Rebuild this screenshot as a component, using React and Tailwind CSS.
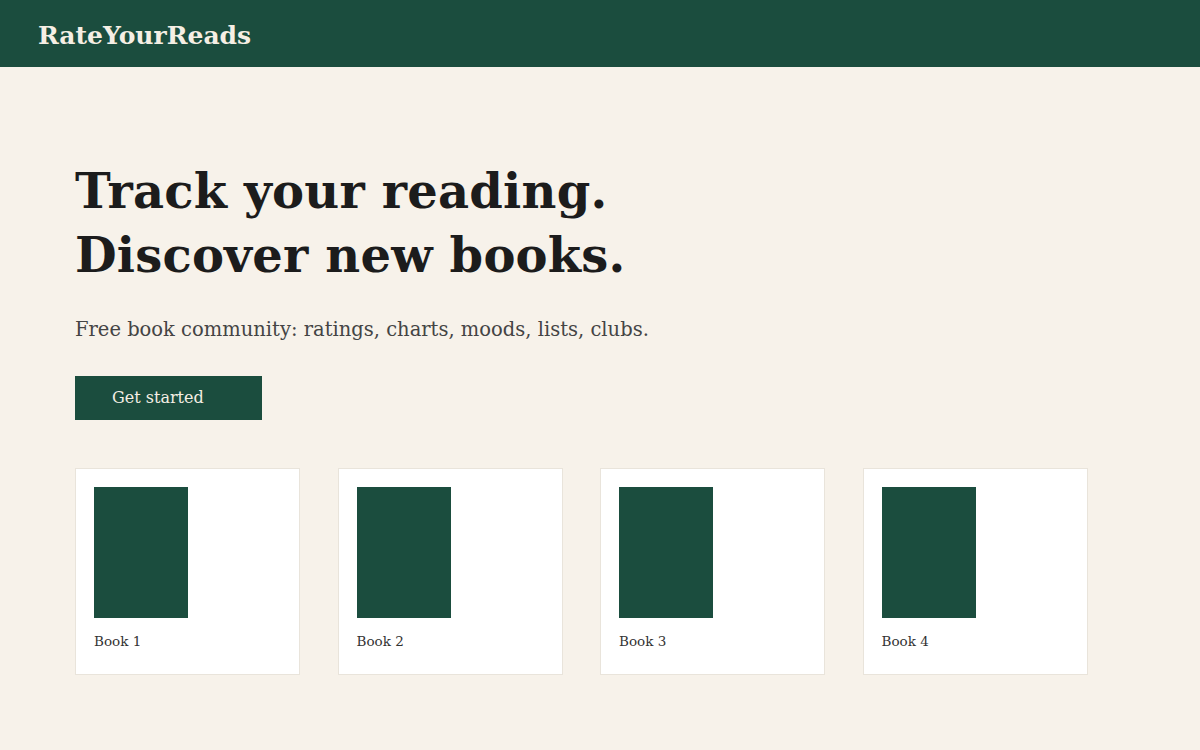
import React from 'react';

const books = ['Book 1', 'Book 2', 'Book 3', 'Book 4'];

const serif = "font-['DejaVu_Serif',Georgia,serif]";

const App = () => {
  return (
    <div className={`min-h-screen bg-[#f7f2ea] text-[#1c1c1c] ${serif}`}>
      <header className="h-[67px] bg-[#1b4d3e] flex items-center px-[38px] pt-[4px]">
        <h1 className="text-[25px] font-bold text-[#f5efe4]">RateYourReads</h1>
      </header>

      <main className="px-[75px] pt-[92px]">
        <h2 className="text-[48px] leading-[64px] font-bold tracking-[0.2px]">
          Track your reading.
          <br />
          Discover new books.
        </h2>
        <p className="mt-[28px] text-[19.5px] text-[#444]">
          Free book community: ratings, charts, moods, lists, clubs.
        </p>
        <button className="mt-[32px] w-[187px] h-[44px] bg-[#1b4d3e] text-[#f5efe4] text-[16px] font-medium text-left pl-[37px]">
          Get started
        </button>

        <div className="mt-[48px] grid grid-cols-[repeat(4,225px)] gap-x-[37.5px]">
          {books.map((b) => (
            <div key={b} className="h-[207px] bg-white border border-[#e9e4db] p-[18px]">
              <div className="w-[94px] h-[131px] bg-[#1b4d3e]" />
              <div className="mt-[13px] text-[13.5px] text-[#333]">{b}</div>
            </div>
          ))}
        </div>
      </main>
    </div>
  );
};

export default App;
